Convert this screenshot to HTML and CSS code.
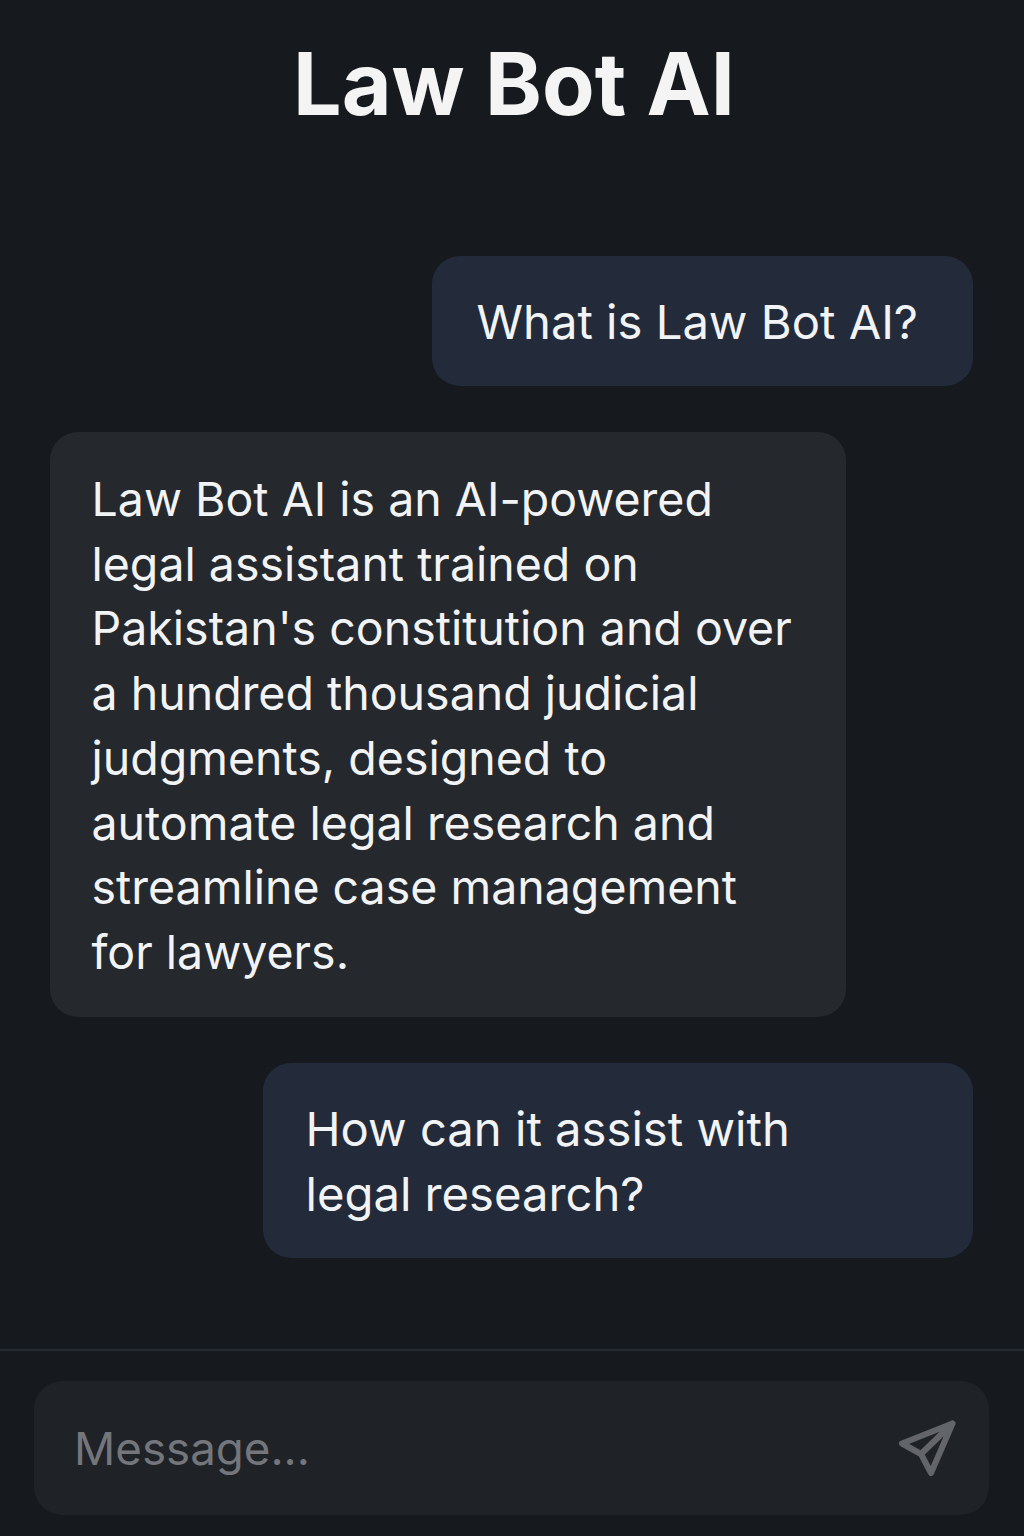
FILE: index.html
```html
<!DOCTYPE html>
<html lang="en">
<head>
<meta charset="utf-8">
<title>Law Bot AI</title>
<link rel="stylesheet" href="styles.css">
</head>
<body>
<div class="app">
  <header class="header"><h1 class="title">Law Bot AI</h1></header>
  <main class="messages">
    <div class="bubble user">What is Law Bot AI?</div>
    <div class="bubble bot">Law Bot AI is an AI-powered legal assistant trained on Pakistan's constitution and over a hundred thousand judicial judgments, designed to automate legal research and streamline case management for lawyers.</div>
    <div class="bubble user wide">How can it assist with legal research?</div>
  </main>
  <footer class="composer">
    <div class="input">
      <span class="placeholder">Message...</span>
      <svg class="send" viewBox="0 0 60 60" fill="none" aria-hidden="true">
        <path d="M55.500 5.500 L5 25.500 L24 36 L34 55 Z M55.500 5.500 L24 36" stroke="currentColor" stroke-width="6" stroke-linejoin="round" stroke-linecap="round"/>
      </svg>
    </div>
  </footer>
</div>
</body>
</html>
```
FILE: styles.css
```css
* { box-sizing: border-box; }
html, body { margin: 0; padding: 0; }
body {
  background: #16191e;
  color: #f2f3f4;
  font-family: Inter, "Liberation Sans", sans-serif;
}
.app {
  width: 1024px;
  height: 1536px;
  display: flex;
  flex-direction: column;
}
.header {
  height: 256px;
  padding: 34px 0 0 4px;
  display: flex;
  justify-content: center;
  align-items: flex-start;
}
.title {
  margin: 0;
  font-size: 86px;
  line-height: 100px;
  font-weight: 700;
  color: #f4f4f4;
}
.messages {
  flex: 1;
  display: flex;
  flex-direction: column;
  gap: 46px;
  padding: 0 51px 0 50px;
}
.bubble {
  font-size: 46.500px;
  line-height: 65px;
  padding: 32.500px 42px;
  border-radius: 28px;
}
.user {
  align-self: flex-end;
  background: #232b3b;
  font-size: 47.200px;
  padding-left: 44px;
  padding-right: 55px;
}
.wide {
  width: 710px;
  padding-left: 42.500px;
  padding-right: 140px;
}
.bot {
  align-self: flex-start;
  width: 796px;
  background: #25282c;
  line-height: 64.700px;
  padding: 35px 42px 32.400px 41.500px;
}
.composer {
  height: 187px;
  border-top: 2px solid #262a31;
  padding: 30px 35px 20px 34px;
}
.input {
  height: 134px;
  background: #1f2227;
  border-radius: 28px;
  padding: 0 32px 0 40px;
  display: flex;
  align-items: center;
  justify-content: space-between;
}
.placeholder {
  font-size: 45.700px;
  color: #74767b;
}
.send {
  width: 60px;
  height: 60px;
  color: #63656b;
}
```
